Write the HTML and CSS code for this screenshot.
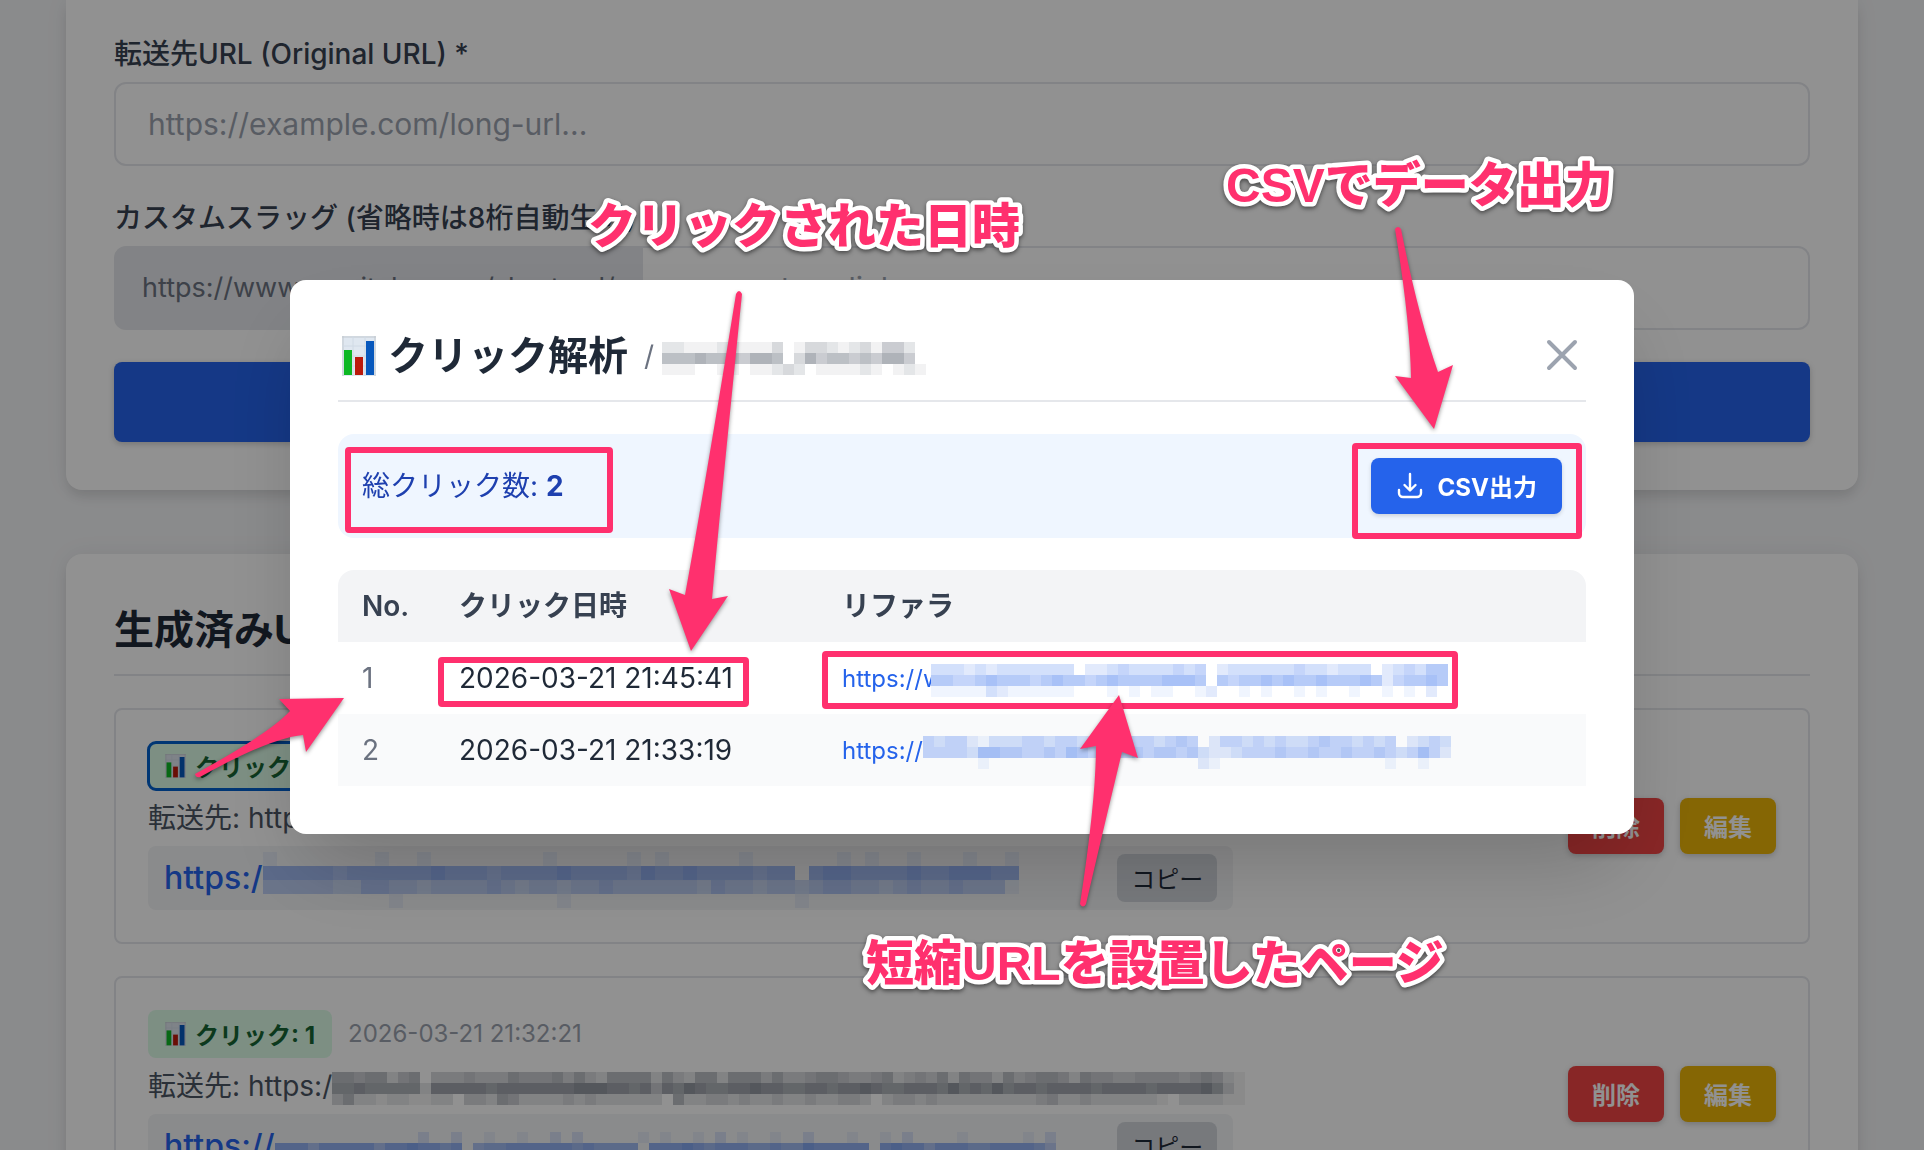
FILE: index.html
```html
<!DOCTYPE html>
<html lang="ja">

<head>
    <meta charset="UTF-8">
    <meta name="viewport" content="width=device-width, initial-scale=1.0">
    <title>短縮URL クリック解析</title>
    <link rel="stylesheet" href="styles.css">
</head>

<body>
    <!-- bar chart icon shared by the badges and the modal title -->
    <svg class="defs" width="0" height="0" aria-hidden="true">
        <symbol id="chart" viewBox="0 0 34 40">
            <rect width="34" height="40" fill="#dfe7f0" />
            <path d="M0 1h34M1 0v40M33 0v40" stroke="#c3c9cf" stroke-width="1" fill="none" />
            <path d="M0 10h34M0 20h34M0 30h34M11 0v40M23 0v40" stroke="#d0dae5" stroke-width="1" fill="none" />
            <rect x="2" y="14" width="8" height="25" fill="#0db824" />
            <rect x="13" y="21" width="8" height="18" fill="#bb1a0c" />
            <rect x="24" y="5" width="8" height="34" fill="#0758bd" />
        </symbol>
    </svg>

    <main class="container">
        <section class="card form-card">
            <form>
                <label for="original_url">転送先URL (Original URL) *</label>
                <input type="text" id="original_url" placeholder="https://example.com/long-url...">
                <label for="slug">カスタムスラッグ (省略時は8桁自動生成)</label>
                <div class="slug-row">
                    <span class="prefix">https://www.gamitaka.com/short_url/</span>
                    <input type="text" id="slug" placeholder="my-custom-link">
                </div>
                <button type="button" class="submit-button">短縮URLを生成</button>
            </form>
        </section>

        <section class="card">
            <h2>生成済みURL一覧</h2>
            <div class="item">
                <div class="item-info">
                    <div class="item-meta">
                        <button class="badge active"><svg class="badge-icon"><use href="#chart" /></svg>クリック: 2</button>
                        <span class="date">2026-03-21 21:32:58</span>
                    </div>
                    <p class="target">転送先: https://www</p>
                    <div class="short-url">
                        <a href="#">https:/<span class="mosaic" data-size="14" data-rows="1000000010010000000010000010100000100000010100100010010
6666656666667666566667666657667666656606776666766777660
4444433554434444543443445444444354434434554434544544410
0000000001000000000001000000000000000010000000000000000"></span></a>
                        <button class="copy-button">コピー</button>
                    </div>
                </div>
                <div class="actions">
                    <button class="delete-button">削除</button>
                    <button class="edit-button">編集</button>
                </div>
            </div>
            <div class="item">
                <div class="item-info">
                    <div class="item-meta">
                        <button class="badge"><svg class="badge-icon"><use href="#chart" /></svg>クリック: 1</button>
                        <span class="date">2026-03-21 21:32:21</span>
                    </div>
                    <p class="target">転送先: https:/<span class="mosaic gray" data-size="11" data-rows="554552450333433354445353255552532552555353345543345234352544253455425443344443454210
667666662777776777777788877674768766778776677677876677768676867767777677776777786310
352212211220332542222323222222052233232232232233202332322222222234223222222102222110"></span></p>
                    <div class="short-url">
                        <a href="#">https://<span class="mosaic" data-size="11" data-rows="0000000000000200200100100202000001010010201001002000100102000010000010200
7775777775778776705667777776766660777876777667668777770787757776677776400
5555553555544655403445544444554540355544554444554445555540565455544455442"></span></a>
                        <button class="copy-button">コピー</button>
                    </div>
                </div>
                <div class="actions">
                    <button class="delete-button">削除</button>
                    <button class="edit-button">編集</button>
                </div>
            </div>
        </section>
    </main>

    <div class="overlay">
        <div class="modal" role="dialog" aria-labelledby="modal_title">
            <div class="modal-header">
                <h3 id="modal_title"><svg class="title-icon"><use href="#chart" /></svg>クリック解析</h3>
                <span class="modal-slug">/ <span class="mosaic gray" data-size="11" data-rows="221112211130133212314420
555655546650364554546640
111001101123201111210121"></span></span>
                <button class="close-button" aria-label="閉じる">
                    <svg width="32" height="32" viewBox="0 0 32 32"><path d="M3 3l26 26M29 3L3 29" fill="none" stroke="#9ca3af" stroke-width="4" stroke-linecap="round" /></svg>
                </button>
            </div>
            <div class="stats">
                <p>総クリック数: <strong>2</strong></p>
                <button class="csv-button">
                    <svg width="28" height="28" viewBox="0 0 28 28"><path d="M14 3v16M8.500 14l5.500 5.500 5.500-5.500M3 19v3a4 4 0 0 0 4 4h14a4 4 0 0 0 4-4v-3" fill="none" stroke="#fff" stroke-width="2.400" stroke-linecap="round" stroke-linejoin="round" /></svg>
                    CSV出力
                </button>
            </div>
            <table>
                <thead>
                    <tr>
                        <th class="col-no">No.</th>
                        <th class="col-date">クリック日時</th>
                        <th>リファラ</th>
                    </tr>
                </thead>
                <tbody>
                    <tr>
                        <td class="no">1</td>
                        <td>2026-03-21 21:45:41</td>
                        <td><a href="#">https://w<span class="mosaic cover" data-size="11" data-rows="33323233333330223433334340233333343323330234355
55445655545655456555566650545565655655565245565
11111321111110001010110012001010010100100101020"></span></a></td>
                    </tr>
                    <tr>
                        <td class="no">2</td>
                        <td>2026-03-21 21:33:19</td>
                        <td><a href="#">https://<span class="mosaic" data-size="11" data-rows="434421333443443333344345402443434334544343402343
444436655445465444454554532234445445445445434642
000001000000000000000000021000000000000000100100"></span></a></td>
                    </tr>
                </tbody>
            </table>
        </div>
    </div>

    <svg class="notes" width="1924" height="1150" viewBox="0 0 1924 1150">
        <g class="frames">
            <rect x="348" y="450" width="262" height="80" rx="1" />
            <rect x="1355" y="446" width="224" height="90" rx="1" />
            <rect x="441" y="660" width="305" height="44" rx="1" />
            <rect x="825" y="654" width="630" height="52" rx="1" />
        </g>
        <g class="arrows">
            <path d="M736 294Q739 288 742 294Q721 500 712 599L728 596L691 651L669 589L685 595Q706 480 736 294Z" />
            <path d="M1395 229Q1398 225 1401 229Q1418 315 1438 372L1453 365L1434 429L1395 376L1411 378Q1410 320 1395 229Z" />
            <path d="M1080 904Q1083 909 1086 904Q1102 835 1122 752L1138 758L1119 695L1080 749L1096 746Q1096 800 1080 904Z" />
            <path d="M195 774Q196 778 200 777Q270 738 303 735L306 752L344 698L279 699L290 711Q270 733 195 774Z" />
        </g>
        <g class="captions">
            <text x="588" y="243">クリックされた日時</text>
            <text x="1226" y="202">CSVでデータ出力</text>
            <text x="866" y="980">短縮URLを設置したページ</text>
        </g>
    </svg>

    <script>
        // Hide private strings behind a mosaic, one digit per cell
        const NS = 'http://www.w3.org/2000/svg';

        document.querySelectorAll('.mosaic').forEach(function (el) {
            const size = parseInt(el.dataset.size);
            const rows = el.dataset.rows.trim().split('\n');
            const svg = document.createElementNS(NS, 'svg');
            svg.setAttribute('width', rows[0].length * size);
            svg.setAttribute('height', rows.length * size);

            rows.forEach(function (row, y) {
                row.trim().split('').forEach(function (level, x) {
                    const rect = document.createElementNS(NS, 'rect');
                    rect.setAttribute('x', x * size);
                    rect.setAttribute('y', y * size);
                    rect.setAttribute('width', size);
                    rect.setAttribute('height', size);
                    rect.setAttribute('fill-opacity', level / 15);
                    svg.appendChild(rect);
                });
            });
            el.appendChild(svg);
        });
    </script>
</body>

</html>
```

FILE: styles.css
```css
* {
    box-sizing: border-box;
}

body {
    font-family: Inter, "Noto Sans CJK JP", sans-serif;
    font-size: 28px;
    line-height: 40px;
    color: #1f2937;
    background-color: #f3f4f6;
    height: 100vh;
    margin: 0;
    overflow: hidden;
}

h2, h3, p {
    margin: 0;
}

button, input {
    font-family: inherit;
}

button {
    border: none;
    border-radius: 8px;
    cursor: pointer;
    padding: 0 0 2px;
}

a {
    color: #2563eb;
    text-decoration: none;
}

.defs {
    position: absolute;
}

.container {
    max-width: 1792px;
    margin: 0 auto;
}

.card {
    background-color: white;
    padding: 48px;
    margin-bottom: 64px;
    border-radius: 16px;
    box-shadow: 0 8px 12px -2px rgba(0, 0, 0, 0.1), 0 0 24px rgba(0, 0, 0, 0.06);
}

.form-card {
    padding-top: 34px;
    border-radius: 0 0 16px 16px;
}

label {
    display: block;
    margin-bottom: 8px;
    font-weight: 500;
    color: #374151;
}

input {
    display: block;
    width: 100%;
    height: 84px;
    margin-bottom: 32px;
    padding: 0 32px;
    font-size: 30px;
    border: 2px solid #e5e7eb;
    border-radius: 12px;
    background-color: white;
}

input::placeholder {
    color: #9ca3af;
}

.slug-row {
    display: flex;
    margin-bottom: 32px;
}

.slug-row input {
    flex: 1;
    margin-bottom: 0;
    border-left: none;
    border-radius: 0 12px 12px 0;
}

.prefix {
    display: flex;
    align-items: center;
    padding: 0 28px;
    font-size: 27px;
    color: #6b7280;
    background-color: #e5e7eb;
    border-radius: 12px 0 0 12px;
}

.submit-button {
    width: 100%;
    height: 80px;
    font-size: 28px;
    font-weight: bold;
    color: white;
    background-color: #2563eb;
    box-shadow: 0 2px 6px rgba(0, 0, 0, 0.2);
}

h2 {
    margin-bottom: 32px;
    padding-bottom: 16px;
    font-size: 40px;
    line-height: 56px;
    border-bottom: 2px solid #e5e7eb;
}

.item {
    display: flex;
    justify-content: space-between;
    align-items: center;
    margin-bottom: 32px;
    padding: 32px;
    border: 2px solid #e5e7eb;
    border-radius: 8px;
}

.item-info {
    width: 66.66%;
}

.item-meta {
    display: flex;
    align-items: center;
    gap: 16px;
}

.badge {
    display: flex;
    align-items: center;
    height: 48px;
    padding: 0 17px 2px;
    font-size: 24px;
    font-weight: bold;
    color: #166534;
    background-color: #dcfce7;
}

.badge.active {
    outline: 3px solid #005fcc;
    outline-offset: -2px;
}

.badge-icon {
    width: 21px;
    height: 24px;
    margin: 2px 9px 0 0;
}

.date {
    font-size: 24px;
    color: #9ca3af;
}

.target {
    margin: 8px 0;
    color: #4b5563;
    white-space: nowrap;
}

.short-url {
    display: flex;
    justify-content: space-between;
    align-items: center;
    height: 64px;
    padding: 0 16px;
    font-size: 32px;
    font-weight: 500;
    background-color: #f3f4f6;
    border-radius: 8px;
}

.copy-button {
    width: 100px;
    height: 48px;
    font-size: 24px;
    color: #1f2937;
    background-color: #d1d5db;
}

.actions {
    display: flex;
    gap: 16px;
}

.actions button {
    width: 96px;
    height: 56px;
    font-size: 24px;
    font-weight: bold;
    color: white;
    box-shadow: 0 2px 6px rgba(0, 0, 0, 0.2);
}

.actions .delete-button {
    background-color: #ef4444;
}

.actions .edit-button {
    background-color: #eab308;
}

.mosaic svg {
    margin: -12px 0;
    vertical-align: middle;
    fill: #2563eb;
}

.mosaic.gray svg {
    fill: #374151;
}

/* overlaps the end of the visible text */
.mosaic.cover svg {
    position: relative;
    margin-left: -12px;
    background-color: white;
}

/* Modal */
.overlay {
    position: fixed;
    inset: 0;
    padding-top: 280px;
    background-color: rgba(0, 0, 0, 0.43);
}

.modal {
    max-width: 1344px;
    margin: 0 auto;
    padding: 48px;
    background-color: white;
    border-radius: 16px;
    box-shadow: 0 40px 80px -16px rgba(0, 0, 0, 0.2);
}

.modal-header {
    display: flex;
    align-items: center;
    gap: 16px;
    margin-bottom: 32px;
    padding-bottom: 16px;
    border-bottom: 2px solid #e5e7eb;
}

h3 {
    display: flex;
    align-items: center;
    padding-left: 4px;
    font-size: 40px;
    line-height: 56px;
}

.title-icon {
    width: 34px;
    height: 40px;
    margin-right: 12px;
}

.modal-slug {
    color: #6b7280;
}

.close-button {
    width: 48px;
    height: 48px;
    margin-left: auto;
    background: none;
}

.close-button svg {
    display: block;
    margin: 0 auto;
}

.stats {
    display: flex;
    justify-content: space-between;
    align-items: center;
    margin-bottom: 32px;
    padding: 24px;
    color: #1e40af;
    background-color: #eff6ff;
    border-radius: 16px;
}

.csv-button {
    display: flex;
    align-items: center;
    gap: 14px;
    height: 56px;
    padding: 0 25px 2px;
    font-size: 24px;
    font-weight: bold;
    color: white;
    background-color: #2563eb;
    box-shadow: 0 2px 4px rgba(0, 0, 0, 0.15);
}

table {
    width: 100%;
    table-layout: fixed;
    border-collapse: collapse;
}

th, td {
    height: 72px;
    padding: 0 24px;
    text-align: left;
    white-space: nowrap;
}

th {
    font-weight: 600;
    color: #374151;
    background-color: #f3f4f6;
}

th:first-child {
    border-radius: 16px 0 0 0;
}

th:last-child {
    border-radius: 0 16px 0 0;
}

tbody tr:nth-child(even) {
    background-color: #f9fafb;
}

.col-no {
    width: 97px;
}

.col-date {
    width: 383px;
}

td.no {
    color: #6b7280;
}

td a {
    font-size: 24px;
}

/* Explanatory notes drawn over the screen */
.notes {
    position: absolute;
    top: 0;
    left: 50%;
    margin-left: -962px;
    pointer-events: none;
}

.frames {
    fill: none;
    stroke: #ff306e;
    stroke-width: 6;
}

.arrows {
    fill: #ff306e;
    filter: drop-shadow(0 2px 2px rgba(0, 0, 0, 0.4));
}

.captions {
    font-family: "Liberation Sans", "Noto Sans CJK JP", sans-serif;
    font-size: 48px;
    font-weight: 900;
    fill: #ff306e;
    stroke: white;
    stroke-width: 9px;
    stroke-linejoin: round;
    paint-order: stroke;
    filter: drop-shadow(0 2px 2px rgba(0, 0, 0, 0.5));
}
```
